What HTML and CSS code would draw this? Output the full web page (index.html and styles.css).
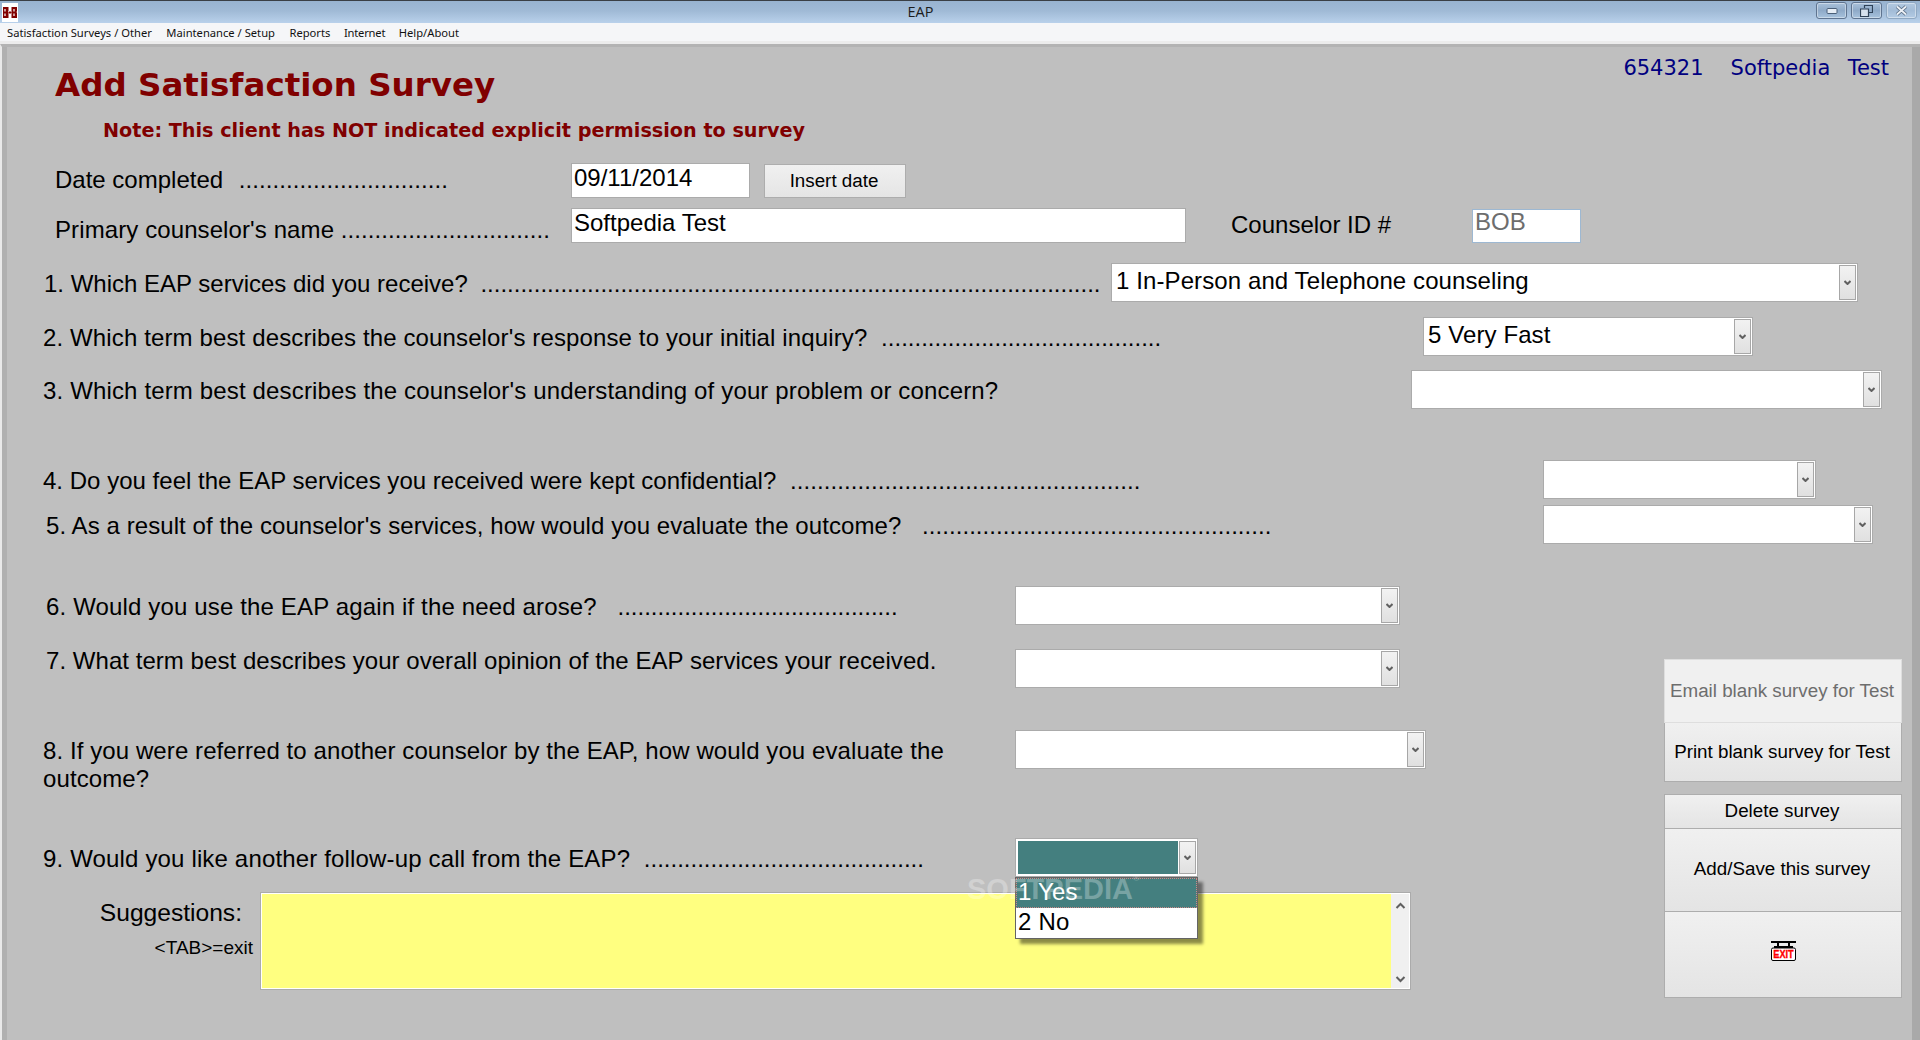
FILE: index.html
```html
<!DOCTYPE html>
<html lang="en">
<head>
<meta charset="utf-8">
<title>EAP</title>
<link rel="stylesheet" href="styles.css">
</head>
<body>
<div class="app">
  <header class="titlebar">
    <svg class="app-icon" width="16" height="19" viewBox="0 0 16 19"><rect width="16" height="19" fill="#fff"/><path d="M1 4h5.500v4.500H6v1h.5V15H1zM9.500 4H15v4.500h-.5v1h.5V15H9.500z" fill="#800000"/><path d="M3 6v2.500M3 10.500V13M12 6v2.500M12 10.500V13" stroke="#fff" stroke-width="1.200"/><path d="M8 8v3M6.500 9.500h3" stroke="#800000"/></svg>
    <span class="app-title">EAP</span>
    <div class="win-buttons">
      <span class="win-btn win-min"><svg width="12" height="6" viewBox="0 0 12 6"><rect x="1" y=".5" width="10" height="5" rx="1" fill="#e6edf5" stroke="#4a5f78"/></svg></span>
      <span class="win-btn win-max"><svg width="13" height="12" viewBox="0 0 13 12"><path d="M4.500 3V.5h8v7H8.500" fill="none" stroke="#2f4258" stroke-width="1.200"/><path d="M.5 4h8v7.500h-8z" fill="#d6e1ee" stroke="#2f4258" stroke-width="1.200"/></svg></span>
      <span class="win-btn win-close"><svg width="13" height="11" viewBox="0 0 13 11"><path d="M2 1.500l9 8M11 1.500l-9 8" stroke="#5c6f86" stroke-width="3.600"/><path d="M2 1.500l9 8M11 1.500l-9 8" stroke="#eef2f7" stroke-width="1.700"/></svg></span>
    </div>
  </header>
  <nav class="menubar">
    <span>Satisfaction Surveys / Other</span>
    <span>Maintenance / Setup</span>
    <span>Reports</span>
    <span>Internet</span>
    <span>Help/About</span>
  </nav>
  <main class="canvas">
    <div class="client"><span class="client-id">654321</span><span class="client-name">Softpedia&nbsp; Test</span></div>
    <h1 class="page-title">Add Satisfaction Survey</h1>
    <p class="note">Note: This client has NOT indicated explicit permission to survey</p>

    <div class="row row-date">
      <label class="lbl lbl-date">Date completed<span class="dots"> ...............................</span></label>
      <div class="input input-date">09/11/2014</div>
      <button class="btn-insert">Insert date</button>
    </div>
    <div class="row row-name">
      <label class="lbl lbl-name">Primary counselor's name<span class="dots"> ...............................</span></label>
      <div class="input input-name">Softpedia Test</div>
      <label class="lbl lbl-id">Counselor ID #</label>
      <div class="input input-id">BOB</div>
    </div>

    <div class="row row-q1">
      <label class="lbl q1">1. Which EAP services did you receive?<span class="dots"> .............................................................................................</span></label>
      <div class="select s1"><span class="val">1 In-Person and Telephone counseling</span><span class="arrow"><svg class="chev" width="7" height="5" viewBox="0 0 7 5"><path d="M.5 1l3 3 3-3" fill="none" stroke="#606060" stroke-width="2"/></svg></span></div>
    </div>
    <div class="row row-q2">
      <label class="lbl q2">2. Which term best describes the counselor's response to your initial inquiry?<span class="dots"> ..........................................</span></label>
      <div class="select s2"><span class="val">5 Very Fast</span><span class="arrow"><svg class="chev" width="7" height="5" viewBox="0 0 7 5"><path d="M.5 1l3 3 3-3" fill="none" stroke="#606060" stroke-width="2"/></svg></span></div>
    </div>
    <div class="row row-q3">
      <label class="lbl q3">3. Which term best describes the counselor's understanding of your problem or concern?</label>
      <div class="select s3"><span class="val"></span><span class="arrow"><svg class="chev" width="7" height="5" viewBox="0 0 7 5"><path d="M.5 1l3 3 3-3" fill="none" stroke="#606060" stroke-width="2"/></svg></span></div>
    </div>
    <div class="row row-q4">
      <label class="lbl q4">4. Do you feel the EAP services you received were kept confidential?<span class="dots"> ....................................................</span></label>
      <div class="select s4"><span class="val"></span><span class="arrow"><svg class="chev" width="7" height="5" viewBox="0 0 7 5"><path d="M.5 1l3 3 3-3" fill="none" stroke="#606060" stroke-width="2"/></svg></span></div>
    </div>
    <div class="row row-q5">
      <label class="lbl q5">5. As a result of the counselor's services, how would you evaluate the outcome?<span class="dots"> ....................................................</span></label>
      <div class="select s5"><span class="val"></span><span class="arrow"><svg class="chev" width="7" height="5" viewBox="0 0 7 5"><path d="M.5 1l3 3 3-3" fill="none" stroke="#606060" stroke-width="2"/></svg></span></div>
    </div>

    <div class="lower">
      <div class="lower-form">
        <div class="row row-q6">
          <label class="lbl q6">6. Would you use the EAP again if the need arose?<span class="dots"> ..........................................</span></label>
          <div class="select s6"><span class="val"></span><span class="arrow"><svg class="chev" width="7" height="5" viewBox="0 0 7 5"><path d="M.5 1l3 3 3-3" fill="none" stroke="#606060" stroke-width="2"/></svg></span></div>
        </div>
        <div class="row row-q7">
          <label class="lbl q7">7. What term best describes your overall opinion of the EAP services your received.</label>
          <div class="select s7"><span class="val"></span><span class="arrow"><svg class="chev" width="7" height="5" viewBox="0 0 7 5"><path d="M.5 1l3 3 3-3" fill="none" stroke="#606060" stroke-width="2"/></svg></span></div>
        </div>
        <div class="row row-q8">
          <label class="lbl q8">8. If you were referred to another counselor by the EAP, how would you evaluate the outcome?</label>
          <div class="select s8"><span class="val"></span><span class="arrow"><svg class="chev" width="7" height="5" viewBox="0 0 7 5"><path d="M.5 1l3 3 3-3" fill="none" stroke="#606060" stroke-width="2"/></svg></span></div>
        </div>
        <div class="row row-q9">
          <label class="lbl q9">9. Would you like another follow-up call from the EAP?<span class="dots"> ..........................................</span></label>
          <div class="select s9"><span class="val val-active"></span><span class="arrow"><svg class="chev" width="7" height="5" viewBox="0 0 7 5"><path d="M.5 1l3 3 3-3" fill="none" stroke="#606060" stroke-width="2"/></svg></span>
            <ul class="dropdown">
              <li class="opt opt-on">1 Yes</li>
              <li class="opt">2 No</li>
            </ul>
          </div>
        </div>
        <div class="row row-sug">
          <div class="sug-labels">
            <label class="sug-title">Suggestions:</label>
            <span class="sug-hint">&lt;TAB&gt;=exit</span>
          </div>
          <div class="memo">
            <div class="memo-body"></div>
            <div class="memo-bar">
              <svg width="11" height="7" viewBox="0 0 11 7"><path d="M1.500 6l4-4 4 4" fill="none" stroke="#606060" stroke-width="2"/></svg>
              <svg width="11" height="7" viewBox="0 0 11 7"><path d="M1.500 1l4 4 4-4" fill="none" stroke="#606060" stroke-width="2"/></svg>
            </div>
          </div>
        </div>
        <div class="watermark">SOFTPEDIA<sup>®</sup></div>
      </div>
      <aside class="actions">
        <div class="group">
          <button class="act act-email">Email blank survey for Test</button>
          <button class="act act-print">Print blank survey for Test</button>
        </div>
        <div class="group">
          <button class="act act-delete">Delete survey</button>
          <button class="act act-add">Add/Save this survey</button>
          <button class="act act-exit" aria-label="Exit">
            <svg width="25" height="20" viewBox="0 0 25 20"><path d="M0 1h25M3 6h19" stroke="#000" stroke-width="2" fill="none"/><path d="M7 1v6M18 1v6" stroke="#000" stroke-width="2"/><rect x=".5" y="7" width="24" height="12.500" rx="1.500" fill="#fff" stroke="#000"/><text transform="translate(12.500 17.200) scale(.8 1)" class="exit-text">EXIT</text></svg>
          </button>
        </div>
      </aside>
    </div>
  </main>
</div>
</body>
</html>
```
FILE: styles.css
```css
* { box-sizing: border-box; }
html, body { margin: 0; height: 100%; overflow: hidden; }
body { font-family: "Liberation Sans", Arial, sans-serif; color: #000; }
.app { width: 1920px; height: 1040px; display: flex; flex-direction: column; background: #ececec; }

.titlebar { height: 23px; flex: none; display: flex; align-items: center; padding-left: 2px;
  border-top: 1px solid #3a3f45; background: linear-gradient(#98b3d0, #a0bad6 45%, #b9d1eb); }
.app-icon { display: block; }
.app-title { flex: 1; text-align: center; font-size: 14.500px; color: #1c1c1c; padding: 0 0 2px 7px; font-family: "Open Sans", sans-serif; }
.win-buttons { display: flex; gap: 4px; margin-right: 3px; align-self: flex-start; margin-top: 1px; }
.win-btn { height: 17px; width: 31px; display: flex; align-items: center; justify-content: center;
  border: 1px solid #5f7490; border-radius: 3px; background: linear-gradient(#a9c1da, #8faac8 50%, #a7c2dd); box-shadow: inset 0 0 0 1px rgba(255,255,255,.4); }
.win-close { border-color: #8fa8c2; background: linear-gradient(#b3c9e0, #a3bcd7 50%, #b3cbe4); }

.menubar { height: 18px; flex: none; display: flex; gap: 14.500px; align-items: center; padding-left: 7px; background: #f5f6f8;
  font-family: "Noto Sans", sans-serif; font-size: 11.200px; color: #111; }
.menubar span:nth-child(4) { margin-left: -1px; letter-spacing: -.2px; }
.menubar span:nth-child(5) { margin-left: -1px; }

.canvas { flex: 1; margin-top: 3px; background: #bfbfbf; border-left: 2px solid #e9e9e9; border-top: 3px solid #b3b3b3; position: relative;
  box-shadow: inset 5px 0 0 #b0b0b0, inset -8px 0 0 #a9a9a9; }

.client { position: absolute; top: 9px; right: 31px; font-family: "DejaVu Sans", sans-serif; font-size: 21px; word-spacing: 2px; color: #000080; display: flex; gap: 27px; }
.page-title { margin: 0; padding: 15px 0 0 53px; height: 60px; font-family: "DejaVu Sans", sans-serif; font-weight: 700; font-size: 32.500px; line-height: 46px; color: #800000; }
.note { margin: 0; padding: 4px 0 0 101px; height: 56px; font-family: "DejaVu Sans", sans-serif; font-weight: 700; font-size: 19.200px; line-height: 40px; color: #800000; }

.row { display: flex; position: relative; }
.lbl { font-size: 24px; line-height: 28px; white-space: pre; display: block; }
.dots { margin-left: 6px; letter-spacing: 0; }

.input { background: #fff; border: 1px solid #ababab; font-size: 24px; line-height: 28px; padding: 0 0 0 2px; }
.row-date { height: 45px; }
.lbl-date { width: 516px; margin-left: 53px; padding-top: 3px; }
.lbl-date .dots { margin-left: 9px; letter-spacing: .08px; }
.input-date { width: 179px; height: 35px; }
.btn-insert { margin-left: 14px; width: 142px; height: 34px; margin-top: 1px; border: 1px solid #adadad; background: linear-gradient(#f0f0f0, #e5e5e5); font: 18.800px "Liberation Sans", sans-serif; padding: 0 2px 1px 0; color: #000; }
.row-name { height: 55px; }
.lbl-name { width: 516px; margin-left: 53px; padding-top: 8px; letter-spacing: .1px; }
.lbl-name .dots { margin-left: 0; letter-spacing: .08px; }
.input-name { width: 615px; height: 35px; }
.lbl-id { margin-left: 45px; width: 241px; padding-top: 3px; }
.input-id { width: 109px; height: 34px; margin-top: 1px; border-color: #9db8d2; color: #6d6d6d; line-height: 24px; }

.select { height: 39px; display: flex; background: #fff; border: 1px solid #ababab; padding: 1px; position: relative; font-size: 24px; line-height: 28px; flex: none; }
.val { flex: 1; padding: 2px 0 0 3px; white-space: pre; letter-spacing: .1px; }
.arrow { width: 17px; margin-left: 1px; border: 1px solid #a7a7a7; background: linear-gradient(#f2f2f2, #e0e0e0); display: flex; align-items: center; justify-content: center; }
.chev { display: block; }

.row-q1 { height: 54px; }
.q1 { margin-left: 42px; width: 1067px; padding-top: 7px; }
.s1 { width: 747px; }
.row-q2 { height: 53px; }
.q2 { margin-left: 41px; width: 1380px; padding-top: 7px; letter-spacing: .13px; }
.q2 .dots { margin-left: 7px; }
.s2 { width: 330px; }
.row-q3 { height: 90px; }
.q3 { margin-left: 41px; width: 1368px; padding-top: 7px; letter-spacing: .15px; }
.s3 { width: 471px; }
.row-q4 { height: 45px; }
.q4 { margin-left: 41px; width: 1500px; padding-top: 7px; letter-spacing: .02px; }
.q4 .dots { margin-left: 7px; letter-spacing: .07px; }
.s4 { width: 273px; }
.row-q5 { height: 81px; }
.q5 { margin-left: 44px; width: 1497px; padding-top: 7px; letter-spacing: .08px; }
.q5 .dots { margin-left: 14px; letter-spacing: .05px; }
.s5 { width: 330px; }

.lower { display: flex; position: relative; }
.lower-form { width: 1662px; flex: none; position: relative; }
.row-q6 { height: 63px; }
.q6 { margin-left: 44px; width: 969px; padding-top: 7px; letter-spacing: .15px; }
.q6 .dots { margin-left: 14px; }
.s6, .s7 { width: 385px; }
.row-q7 { height: 81px; }
.q7 { margin-left: 44px; width: 969px; margin-top: -2px; letter-spacing: .045px; }
.row-q8 { height: 108px; }
.q8 { margin-left: 41px; width: 972px; padding: 7px 45px 0 0; white-space: normal; letter-spacing: .09px; }
.s8 { width: 411px; }
.row-q9 { height: 54px; z-index: 2; }
.q9 { margin-left: 41px; width: 972px; padding-top: 7px; letter-spacing: .16px; }
.q9 .dots { margin-left: 7px; }
.s9 { width: 183px; padding: 2px 1px 2px 1px; }
.val-active { background: #447f7f; margin-left: 1px; }

.dropdown { list-style: none; margin: 0; padding: 0; position: absolute; left: -1px; top: 38px; width: 183px; height: 62px; background: #fff; border: 1px solid #646464; box-shadow: 5px 5px 3px rgba(0,0,0,.45); }
.opt { height: 30px; line-height: 27px; padding-left: 2px; letter-spacing: .2px; }
.opt-on { background: #447f7f; color: #fff; outline: 1px dotted #c88; outline-offset: -1px; }

.row-sug { height: 98px; }
.sug-labels { width: 258px; flex: none; display: flex; flex-direction: column; align-items: flex-end; padding-right: 7px; }
.sug-title { font-size: 24.600px; line-height: 28px; margin-right: 11px; padding-top: 7px; }
.sug-hint { font-size: 19px; line-height: 22px; margin-top: 10px; }
.memo { width: 1151px; display: flex; border: 1px solid #ababab; background: #fff; padding: 1px; }
.memo-body { flex: 1; background: #ffff80; }
.memo-bar { width: 18px; background: #f0f0f0; display: flex; flex-direction: column; justify-content: space-between; align-items: center; padding: 8px 0 5px; }

.watermark { position: absolute; left: 965px; top: 287px; z-index: 3; font: 700 29px "Liberation Sans", sans-serif; color: rgba(255,255,255,.28); pointer-events: none; white-space: nowrap; }
.watermark sup { font-size: 9px; vertical-align: top; }

.actions { width: 238px; margin-top: 73px; display: flex; flex-direction: column; gap: 12px; }
.group { display: flex; flex-direction: column; }
.act { width: 238px; border: 1px solid #adadad; background: linear-gradient(#f0f0f0, #e4e4e4); font: 18.800px "Liberation Sans", sans-serif; color: #000; padding: 0 2px 0 0; display: block; }
.act + .act { border-top: 0; }
.act-email { height: 64px; background: #f0f0f0; border-color: #dedede; color: #6d6d6d; }
.act-print { height: 59px; }
.act-delete { height: 35px; padding-bottom: 2px; }
.act-add { height: 83px; padding-bottom: 2px; }
.act-exit { height: 86px; padding: 0 0 7px; }
.act-exit svg { display: block; margin: 0 auto; }
.exit-text { font: 700 11.500px "Liberation Sans", sans-serif; fill: #f00; stroke: #f00; stroke-width: .35px; text-anchor: middle; }
```
